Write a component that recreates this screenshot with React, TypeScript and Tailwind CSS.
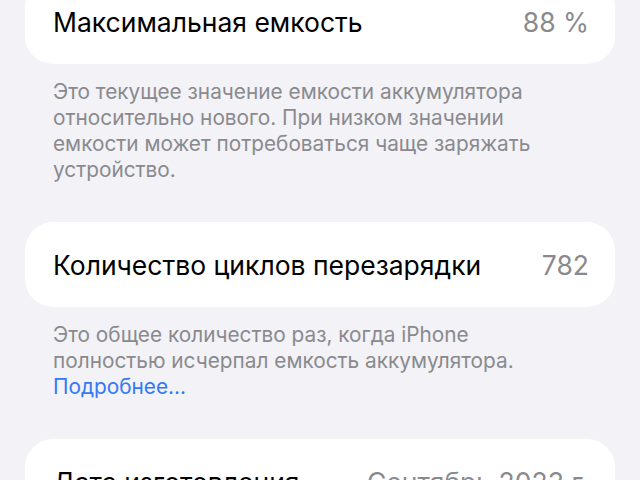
import React from "react";

// Battery health rows with their footnotes
interface Row {
  title: string;
  value: string;
  note?: React.ReactNode;
}

const rows: Row[] = [
  {
    title: "Максимальная емкость",
    value: "88 %",
    note: (
      <>
        Это текущее значение емкости аккумулятора
        <br />
        относительно нового. При низком значении
        <br />
        емкости может потребоваться чаще заряжать
        <br />
        устройство.
      </>
    ),
  },
  {
    title: "Количество циклов перезарядки",
    value: "782",
    note: (
      <>
        Это общее количество раз, когда iPhone
        <br />
        полностью исчерпал емкость аккумулятора.
        <br />
        <span className="text-[#3478f6]">Подробнее…</span>
      </>
    ),
  },
  {
    title: "Дата изготовления",
    value: "Сентябрь 2023 г.",
  },
];

const Card = ({ title, value }: { title: string; value: string }) => (
  <div className="h-[85px] rounded-[28px] bg-white flex items-center justify-between pl-[28px] pr-[26px]">
    <span className="text-[26.5px] text-black pt-[3px]">{title}</span>
    <span className="text-[26.5px] text-[#8a8a8e] pt-[3px]">{value}</span>
  </div>
);

export default function App() {
  return (
    <div
      className="h-[480px] overflow-hidden bg-[#f2f2f7] px-[25px]"
      style={{ fontFamily: "Inter, 'Noto Sans', sans-serif" }}
    >
      <div className="-mt-[21px] flex flex-col">
        {rows.map((r, i) => (
          <div key={i} className="mb-[39px]">
            <Card title={r.title} value={r.value} />
            {r.note && (
              <p className="mt-[15px] px-[28px] text-[20.8px] leading-[26px] text-[#8a8a8e]">{r.note}</p>
            )}
          </div>
        ))}
      </div>
    </div>
  );
}
